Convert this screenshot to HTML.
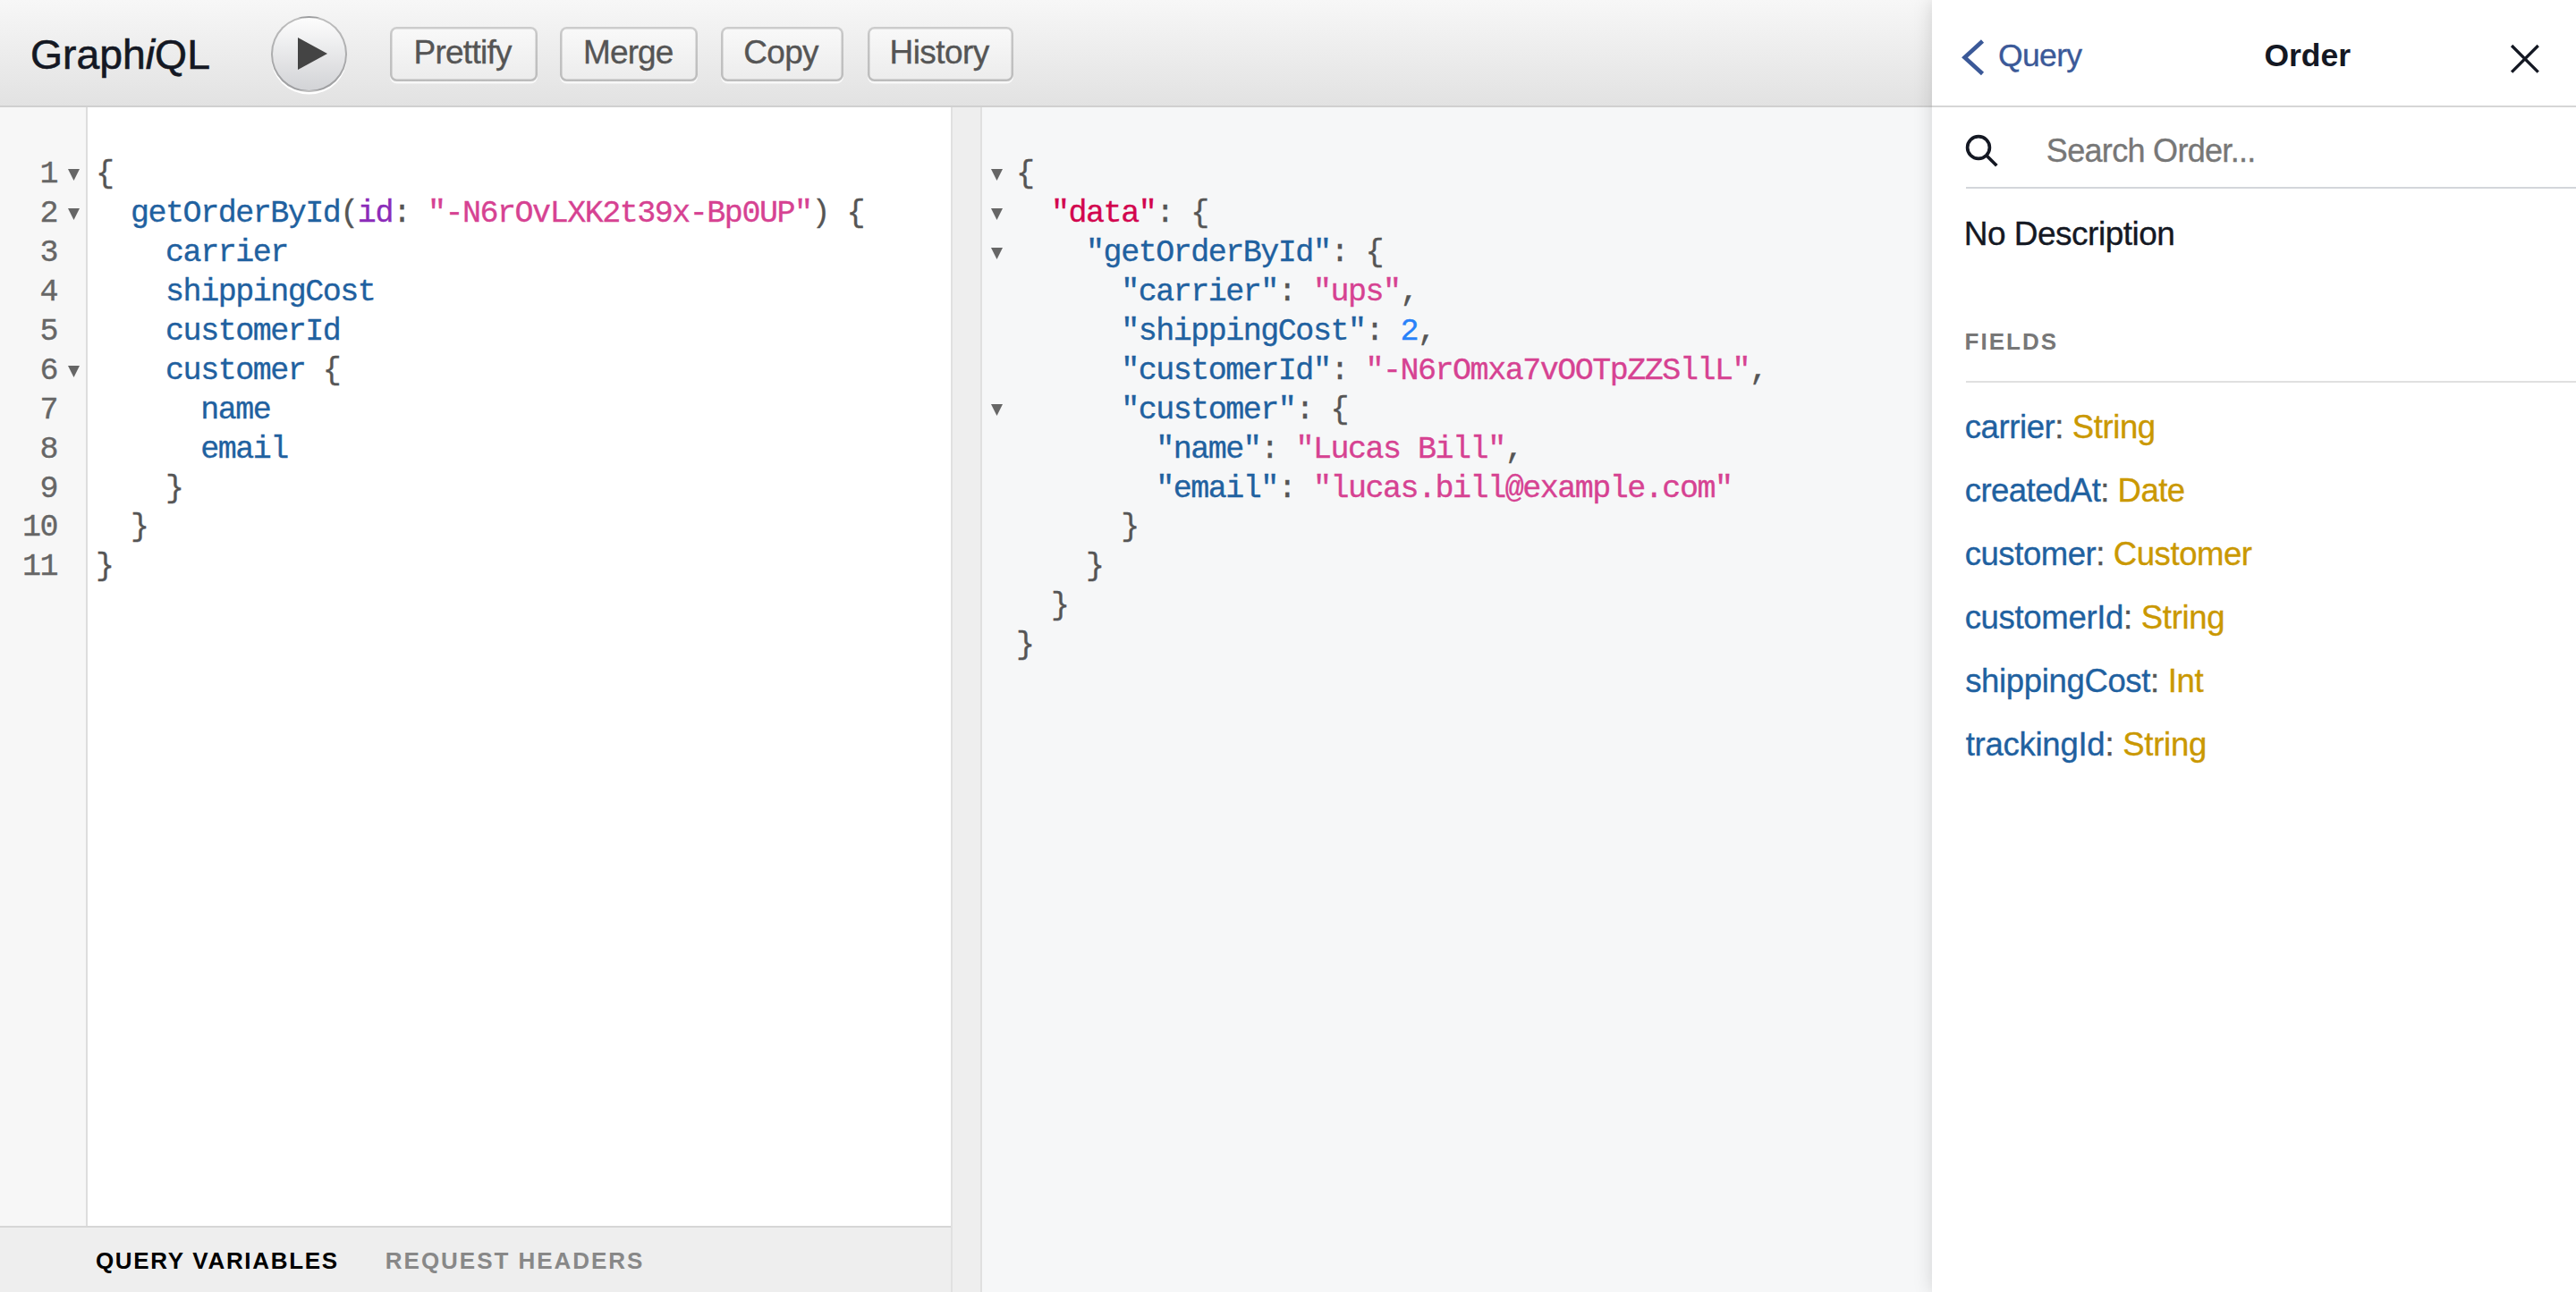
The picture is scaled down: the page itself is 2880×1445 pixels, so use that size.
<!DOCTYPE html>
<html><head><meta charset="utf-8"><title>GraphiQL</title>
<style>
html,body{margin:0;padding:0;width:2880px;height:1445px;overflow:hidden;background:#fff;}
body{position:relative;font-family:"Liberation Sans",sans-serif;}
.abs{position:absolute;}
.t{position:absolute;white-space:nowrap;}
.cl{position:absolute;white-space:pre;font-family:"Liberation Mono",monospace;font-size:35.00px;line-height:43.93px;letter-spacing:-1.480px;color:#555;-webkit-text-stroke:0.35px currentColor;}
.ln{position:absolute;left:0;width:64.00px;text-align:right;white-space:pre;font-family:"Liberation Mono",monospace;font-size:35.00px;line-height:43.93px;letter-spacing:-1.480px;color:#666;-webkit-text-stroke:0.35px currentColor;}
.fold{position:absolute;}
.btn{position:absolute;top:30px;height:60.5px;box-sizing:border-box;border-radius:7.5px;background:linear-gradient(#f9f9f9,#ececec);box-shadow:inset 0 0 0 2.5px rgba(0,0,0,0.2),0 2.5px 0 rgba(255,255,255,0.7),inset 0 2.5px #fff;}
</style></head><body>

<div class="abs" style="left:0;top:0;width:2160px;height:118px;background:linear-gradient(#f7f7f7,#e2e2e2);border-bottom:2px solid #d0d0d0;"></div>
<div class="t" style="left:33.67px;top:36.81px;font-size:47.00px;line-height:47.00px;color:#141823;font-weight:normal;-webkit-text-stroke:0.6px #141823;transform:scaleX(0.9858);transform-origin:0 0;">Graph<i>i</i>QL</div>
<div class="abs" style="left:303px;top:18px;width:84.5px;height:84.5px;box-sizing:border-box;border-radius:50%;border:2.5px solid rgba(0,0,0,0.25);background:linear-gradient(#fdfdfd,#d2d3d6);box-shadow:0 2.5px 0 #fff;"></div>
<svg class="abs" style="left:0;top:0" width="400" height="120"><polygon points="333,42 366,60 333,78" fill="#444"/></svg>
<div class="btn" style="left:436.0px;width:164.5px"></div>
<div class="btn" style="left:626.0px;width:153.5px"></div>
<div class="btn" style="left:805.5px;width:137.5px"></div>
<div class="btn" style="left:969.5px;width:163.5px"></div>
<div class="t" style="left:462.46px;top:39.87px;font-size:37.00px;line-height:37.00px;color:#555;font-weight:normal;letter-spacing:-0.719px;-webkit-text-stroke:0.35px currentColor;">Prettify</div>
<div class="t" style="left:651.96px;top:39.87px;font-size:37.00px;line-height:37.00px;color:#555;font-weight:normal;letter-spacing:-0.862px;-webkit-text-stroke:0.35px currentColor;">Merge</div>
<div class="t" style="left:831.37px;top:39.87px;font-size:37.00px;line-height:37.00px;color:#555;font-weight:normal;letter-spacing:-0.725px;-webkit-text-stroke:0.35px currentColor;">Copy</div>
<div class="t" style="left:994.46px;top:39.87px;font-size:37.00px;line-height:37.00px;color:#555;font-weight:normal;letter-spacing:-0.544px;-webkit-text-stroke:0.35px currentColor;">History</div>
<div class="abs" style="left:0;top:120px;width:96px;height:1251px;background:#f7f7f7;border-right:2px solid #dddddd;"></div>
<div class="abs" style="left:98px;top:120px;width:965px;height:1251px;background:#fff;"></div>
<div class="abs" style="left:1063px;top:120px;width:2px;height:1325px;background:#e0e0e0;"></div>
<div class="abs" style="left:1065px;top:120px;width:31px;height:1325px;background:#eeeeee;border-right:2px solid #e0e0e0;"></div>
<div class="abs" style="left:1098px;top:120px;width:1062px;height:1325px;background:#f6f7f8;"></div>
<div class="ln" style="top:174.12px">1</div>
<div class="ln" style="top:218.05px">2</div>
<div class="ln" style="top:261.98px">3</div>
<div class="ln" style="top:305.91px">4</div>
<div class="ln" style="top:349.84px">5</div>
<div class="ln" style="top:393.77px">6</div>
<div class="ln" style="top:437.70px">7</div>
<div class="ln" style="top:481.63px">8</div>
<div class="ln" style="top:525.56px">9</div>
<div class="ln" style="top:569.49px">10</div>
<div class="ln" style="top:613.42px">11</div>
<svg class="fold" style="left:75.80px;top:188.90px" width="14" height="14" viewBox="0 0 14 14"><polygon points="0,0 13,0 6.5,13" fill="#666"/></svg>
<svg class="fold" style="left:75.80px;top:232.83px" width="14" height="14" viewBox="0 0 14 14"><polygon points="0,0 13,0 6.5,13" fill="#666"/></svg>
<svg class="fold" style="left:75.80px;top:408.55px" width="14" height="14" viewBox="0 0 14 14"><polygon points="0,0 13,0 6.5,13" fill="#666"/></svg>
<div class="cl" style="left:107.00px;top:174.12px"><span style="color:#555555">{</span></div>
<div class="cl" style="left:107.00px;top:218.05px">  <span style="color:#1F61A0">getOrderById</span><span style="color:#555555">(</span><span style="color:#8B2BB9">id</span><span style="color:#555555">:</span> <span style="color:#D64292">"-N6rOvLXK2t39x-Bp0UP"</span><span style="color:#555555">)</span> <span style="color:#555555">{</span></div>
<div class="cl" style="left:107.00px;top:261.98px">    <span style="color:#1F61A0">carrier</span></div>
<div class="cl" style="left:107.00px;top:305.91px">    <span style="color:#1F61A0">shippingCost</span></div>
<div class="cl" style="left:107.00px;top:349.84px">    <span style="color:#1F61A0">customerId</span></div>
<div class="cl" style="left:107.00px;top:393.77px">    <span style="color:#1F61A0">customer</span> <span style="color:#555555">{</span></div>
<div class="cl" style="left:107.00px;top:437.70px">      <span style="color:#1F61A0">name</span></div>
<div class="cl" style="left:107.00px;top:481.63px">      <span style="color:#1F61A0">email</span></div>
<div class="cl" style="left:107.00px;top:525.56px">    <span style="color:#555555">}</span></div>
<div class="cl" style="left:107.00px;top:569.49px">  <span style="color:#555555">}</span></div>
<div class="cl" style="left:107.00px;top:613.42px"><span style="color:#555555">}</span></div>
<svg class="fold" style="left:1108.00px;top:188.90px" width="14" height="14" viewBox="0 0 14 14"><polygon points="0,0 13,0 6.5,13" fill="#666"/></svg>
<svg class="fold" style="left:1108.00px;top:232.83px" width="14" height="14" viewBox="0 0 14 14"><polygon points="0,0 13,0 6.5,13" fill="#666"/></svg>
<svg class="fold" style="left:1108.00px;top:276.76px" width="14" height="14" viewBox="0 0 14 14"><polygon points="0,0 13,0 6.5,13" fill="#666"/></svg>
<svg class="fold" style="left:1108.00px;top:452.48px" width="14" height="14" viewBox="0 0 14 14"><polygon points="0,0 13,0 6.5,13" fill="#666"/></svg>
<div class="cl" style="left:1136.00px;top:174.12px"><span style="color:#555555">{</span></div>
<div class="cl" style="left:1136.00px;top:218.05px">  <span style="color:#D2054E">"data"</span><span style="color:#555555">: {</span></div>
<div class="cl" style="left:1136.00px;top:261.98px">    <span style="color:#1F61A0">"getOrderById"</span><span style="color:#555555">: {</span></div>
<div class="cl" style="left:1136.00px;top:305.91px">      <span style="color:#1F61A0">"carrier"</span><span style="color:#555555">: </span><span style="color:#D64292">"ups"</span><span style="color:#555555">,</span></div>
<div class="cl" style="left:1136.00px;top:349.84px">      <span style="color:#1F61A0">"shippingCost"</span><span style="color:#555555">: </span><span style="color:#2882F9">2</span><span style="color:#555555">,</span></div>
<div class="cl" style="left:1136.00px;top:393.77px">      <span style="color:#1F61A0">"customerId"</span><span style="color:#555555">: </span><span style="color:#D64292">"-N6rOmxa7vOOTpZZSllL"</span><span style="color:#555555">,</span></div>
<div class="cl" style="left:1136.00px;top:437.70px">      <span style="color:#1F61A0">"customer"</span><span style="color:#555555">: {</span></div>
<div class="cl" style="left:1136.00px;top:481.63px">        <span style="color:#1F61A0">"name"</span><span style="color:#555555">: </span><span style="color:#D64292">"Lucas Bill"</span><span style="color:#555555">,</span></div>
<div class="cl" style="left:1136.00px;top:525.56px">        <span style="color:#1F61A0">"email"</span><span style="color:#555555">: </span><span style="color:#D64292">"lucas.bill@example.com"</span></div>
<div class="cl" style="left:1136.00px;top:569.49px">      <span style="color:#555555">}</span></div>
<div class="cl" style="left:1136.00px;top:613.42px">    <span style="color:#555555">}</span></div>
<div class="cl" style="left:1136.00px;top:657.35px">  <span style="color:#555555">}</span></div>
<div class="cl" style="left:1136.00px;top:701.28px"><span style="color:#555555">}</span></div>
<div class="abs" style="left:0;top:1371px;width:1063px;height:72px;background:#eeeeee;border-top:2px solid #d6d6d6;border-bottom:2px solid #d6d6d6;"></div>
<div class="t" style="left:106.93px;top:1396.89px;font-size:26.00px;line-height:26.00px;color:#000;font-weight:bold;letter-spacing:1.690px;">QUERY VARIABLES</div>
<div class="t" style="left:430.86px;top:1396.89px;font-size:26.00px;line-height:26.00px;color:#888;font-weight:bold;letter-spacing:1.965px;">REQUEST HEADERS</div>
<div class="abs" style="left:2160px;top:0;width:720px;height:1445px;background:#fff;box-shadow:0 0 20px rgba(0,0,0,0.15);"></div>
<div class="abs" style="left:2160px;top:118px;width:720px;height:2px;background:#d6d6d6;"></div>
<svg class="abs" style="left:2180px;top:30px" width="60" height="70"><polyline points="36.5,16 16.5,34.2 36.5,52.5" fill="none" stroke="#3B5998" stroke-width="4.6"/></svg>
<div class="t" style="left:2234.07px;top:45.44px;font-size:35.50px;line-height:35.50px;color:#3B5998;font-weight:normal;letter-spacing:-0.668px;-webkit-text-stroke:0.35px currentColor;">Query</div>
<div class="t" style="left:2531.54px;top:45.44px;font-size:35.50px;line-height:35.50px;color:#141823;font-weight:bold;letter-spacing:-0.045px;">Order</div>
<svg class="abs" style="left:2800px;top:42px" width="48" height="48"><path d="M8.1,9 L37.7,38.6 M37.7,9 L8.1,38.6" stroke="#141823" stroke-width="3.3" fill="none"/></svg>
<svg class="abs" style="left:2190px;top:140px" width="60" height="60"><circle cx="22" cy="25" r="12.4" fill="none" stroke="#141823" stroke-width="3.7"/><line x1="31" y1="34" x2="42.3" y2="45.3" stroke="#141823" stroke-width="3.7"/></svg>
<div class="t" style="left:2287.87px;top:150.72px;font-size:36.00px;line-height:36.00px;color:#777;font-weight:normal;letter-spacing:-0.691px;-webkit-text-stroke:0.35px currentColor;">Search Order...</div>
<div class="abs" style="left:2198px;top:209px;width:682px;height:2px;background:#d3d6db;"></div>
<div class="t" style="left:2195.71px;top:242.92px;font-size:37.00px;line-height:37.00px;color:#141823;font-weight:normal;letter-spacing:-0.497px;-webkit-text-stroke:0.35px currentColor;">No Description</div>
<div class="t" style="left:2196.56px;top:368.59px;font-size:26.00px;line-height:26.00px;color:#777;font-weight:bold;letter-spacing:2.022px;">FIELDS</div>
<div class="abs" style="left:2198px;top:425.5px;width:682px;height:2px;background:#e0e0e0;"></div>
<div class="t" style="left:2196.65px;top:460.30px;font-size:36.50px;line-height:36.50px;color:#555;font-weight:normal;letter-spacing:-0.396px;-webkit-text-stroke:0.35px currentColor;"><span style="color:#1F61A0">carrier</span>: <span style="color:#CA9800">String</span></div>
<div class="t" style="left:2196.65px;top:531.25px;font-size:36.50px;line-height:36.50px;color:#555;font-weight:normal;letter-spacing:-0.510px;-webkit-text-stroke:0.35px currentColor;"><span style="color:#1F61A0">createdAt</span>: <span style="color:#CA9800">Date</span></div>
<div class="t" style="left:2196.65px;top:602.20px;font-size:36.50px;line-height:36.50px;color:#555;font-weight:normal;letter-spacing:-0.425px;-webkit-text-stroke:0.35px currentColor;"><span style="color:#1F61A0">customer</span>: <span style="color:#CA9800">Customer</span></div>
<div class="t" style="left:2196.65px;top:673.15px;font-size:36.50px;line-height:36.50px;color:#555;font-weight:normal;letter-spacing:-0.310px;-webkit-text-stroke:0.35px currentColor;"><span style="color:#1F61A0">customerId</span>: <span style="color:#CA9800">String</span></div>
<div class="t" style="left:2197.18px;top:744.10px;font-size:36.50px;line-height:36.50px;color:#555;font-weight:normal;letter-spacing:-0.343px;-webkit-text-stroke:0.35px currentColor;"><span style="color:#1F61A0">shippingCost</span>: <span style="color:#CA9800">Int</span></div>
<div class="t" style="left:2197.65px;top:815.05px;font-size:36.50px;line-height:36.50px;color:#555;font-weight:normal;letter-spacing:-0.251px;-webkit-text-stroke:0.35px currentColor;"><span style="color:#1F61A0">trackingId</span>: <span style="color:#CA9800">String</span></div>
</body></html>
